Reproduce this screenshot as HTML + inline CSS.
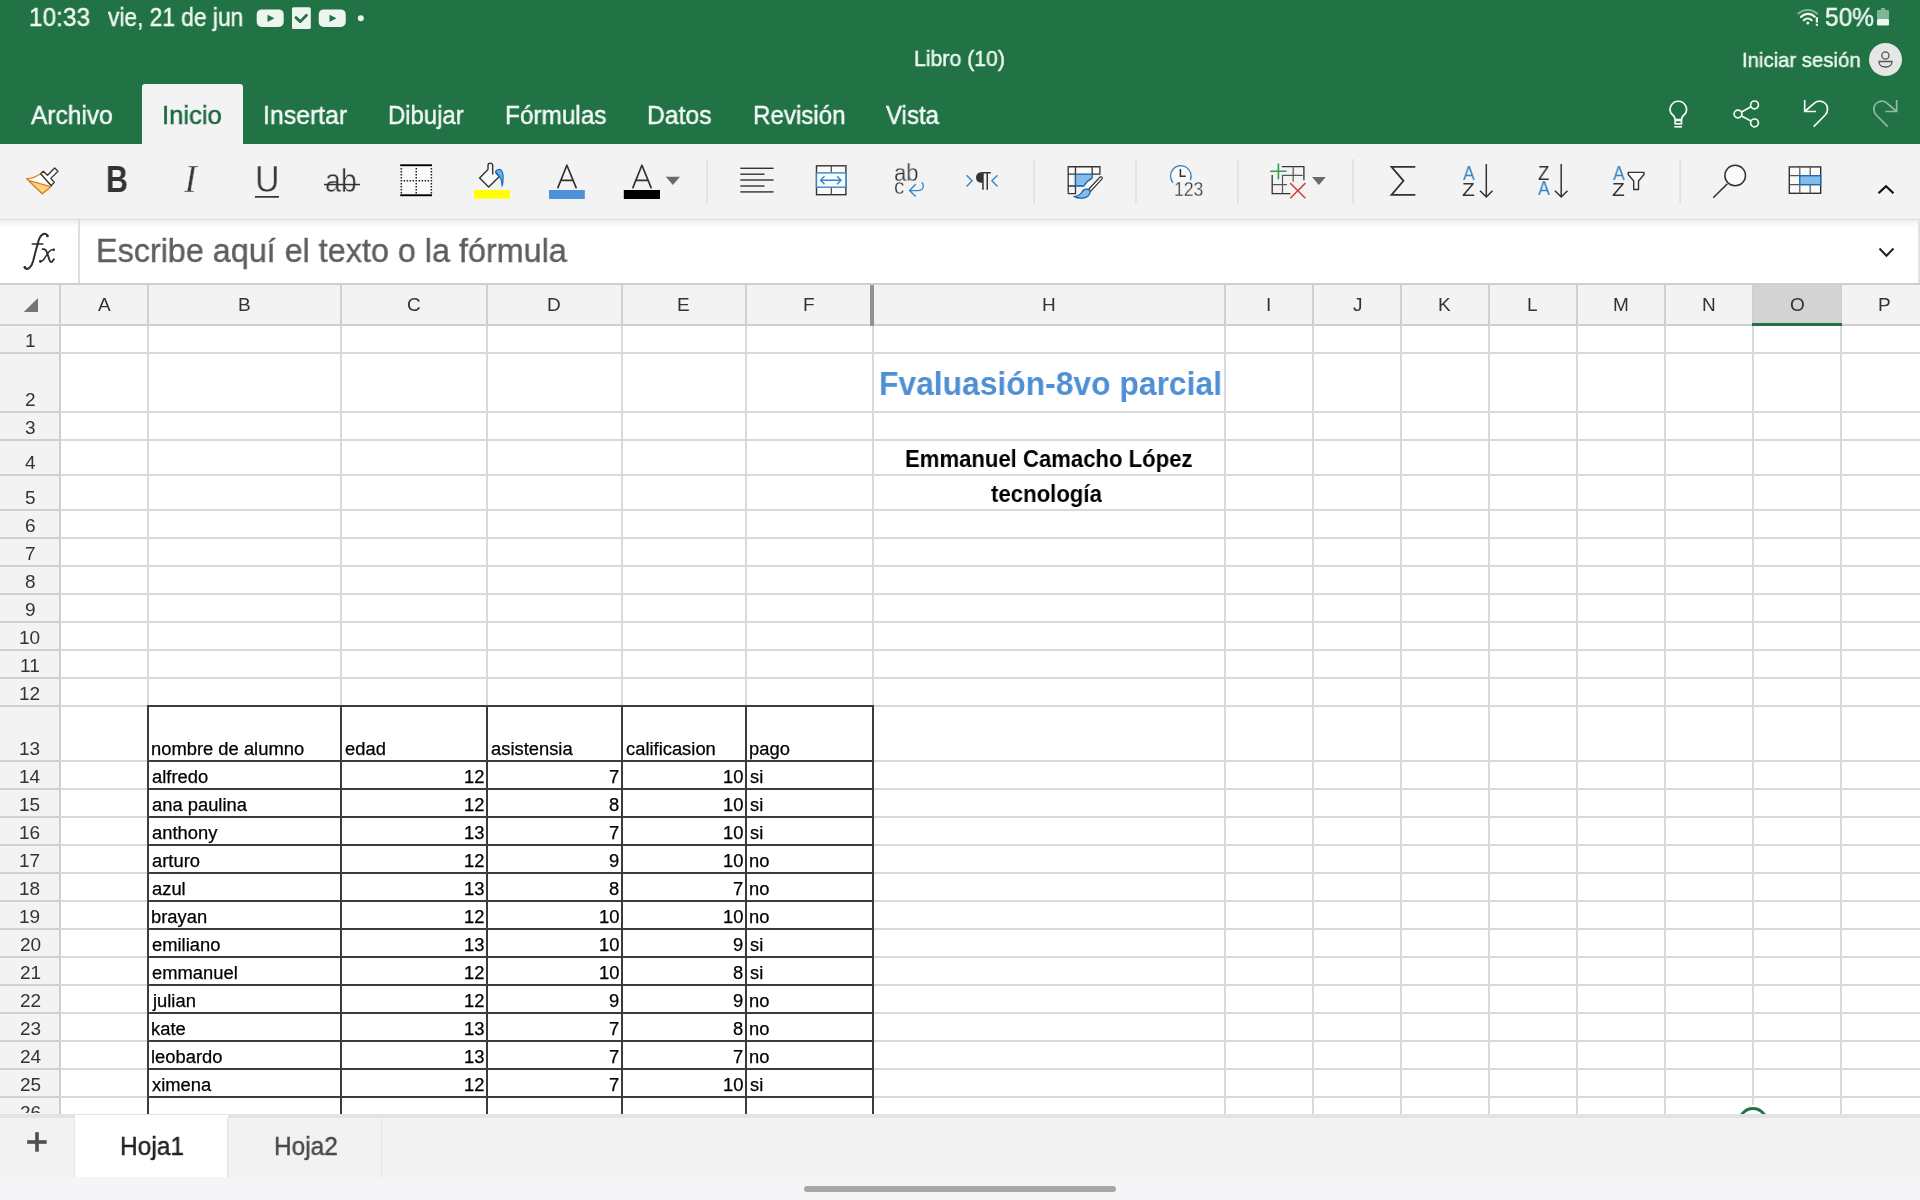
<!DOCTYPE html>
<html><head><meta charset="utf-8"><style>
html,body{margin:0;padding:0;width:1920px;height:1200px;overflow:hidden;background:#fff;}
.t{position:absolute;white-space:nowrap;line-height:1;transform-origin:0 0;will-change:transform;font-family:"Liberation Sans",sans-serif;}
.r{position:absolute;}
svg{position:absolute;left:0;top:0;}
</style></head><body>
<div class="r" style="left:0px;top:0px;width:1920px;height:144px;background:#217346;"></div>
<div class="r" style="left:0px;top:144px;width:1920px;height:75px;background:#f3f3f3;"></div>
<div class="r" style="left:0px;top:219px;width:1920px;height:1px;background:#dadada;"></div>
<div class="r" style="left:0px;top:220px;width:1920px;height:64px;background:#ffffff;"></div>
<div class="r" style="left:0px;top:284px;width:1920px;height:830px;background:#ffffff;"></div>
<div class="r" style="left:0px;top:1114px;width:1920px;height:63px;background:#f2f2f2;"></div>
<div class="r" style="left:0px;top:1177px;width:1920px;height:23px;background:#f5f5f7;"></div>
<div class="t" style="left:29.05px;top:4.84px;font-size:25px;color:#eef7f0;font-family:'Liberation Sans', sans-serif;font-weight:normal;font-style:normal;transform:scaleX(0.9748);-webkit-text-stroke:0.45px currentColor;">10:33</div>
<div class="t" style="left:108.00px;top:4.84px;font-size:25px;color:#eef7f0;font-family:'Liberation Sans', sans-serif;font-weight:normal;font-style:normal;transform:scaleX(0.9095);-webkit-text-stroke:0.45px currentColor;">vie, 21 de jun</div>
<div class="t" style="left:1825.02px;top:4.84px;font-size:25px;color:#eef7f0;font-family:'Liberation Sans', sans-serif;font-weight:normal;font-style:normal;transform:scaleX(0.9792);-webkit-text-stroke:0.45px currentColor;">50%</div>
<div class="t" style="left:914.31px;top:48.38px;font-size:22px;color:#eef7f0;font-family:'Liberation Sans', sans-serif;font-weight:normal;font-style:normal;transform:scaleX(0.9670);-webkit-text-stroke:0.45px currentColor;">Libro (10)</div>
<div class="t" style="left:1742.06px;top:48.92px;font-size:21px;color:#eef7f0;font-family:'Liberation Sans', sans-serif;font-weight:normal;font-style:normal;transform:scaleX(0.9677);-webkit-text-stroke:0.45px currentColor;">Iniciar sesión</div>
<div class="r" style="left:142px;top:84px;width:101px;height:61px;background:#f3f3f3;border-radius:3px 3px 0 0;"></div>
<div class="t" style="left:30.50px;top:101.99px;font-size:26px;color:#f4faf6;font-family:'Liberation Sans', sans-serif;font-weight:normal;font-style:normal;transform:scaleX(0.9423);-webkit-text-stroke:0.45px currentColor;">Archivo</div>
<div class="t" style="left:162.49px;top:101.99px;font-size:26px;color:#17673b;font-family:'Liberation Sans', sans-serif;font-weight:normal;font-style:normal;transform:scaleX(0.9843);-webkit-text-stroke:0.45px currentColor;">Inicio</div>
<div class="t" style="left:262.85px;top:101.99px;font-size:26px;color:#f4faf6;font-family:'Liberation Sans', sans-serif;font-weight:normal;font-style:normal;transform:scaleX(0.9544);-webkit-text-stroke:0.45px currentColor;">Insertar</div>
<div class="t" style="left:388.46px;top:101.99px;font-size:26px;color:#f4faf6;font-family:'Liberation Sans', sans-serif;font-weight:normal;font-style:normal;transform:scaleX(0.9187);-webkit-text-stroke:0.45px currentColor;">Dibujar</div>
<div class="t" style="left:505.43px;top:101.99px;font-size:26px;color:#f4faf6;font-family:'Liberation Sans', sans-serif;font-weight:normal;font-style:normal;transform:scaleX(0.9368);-webkit-text-stroke:0.45px currentColor;">Fórmulas</div>
<div class="t" style="left:647.40px;top:101.99px;font-size:26px;color:#f4faf6;font-family:'Liberation Sans', sans-serif;font-weight:normal;font-style:normal;transform:scaleX(0.9492);-webkit-text-stroke:0.45px currentColor;">Datos</div>
<div class="t" style="left:752.84px;top:101.99px;font-size:26px;color:#f4faf6;font-family:'Liberation Sans', sans-serif;font-weight:normal;font-style:normal;transform:scaleX(0.9281);-webkit-text-stroke:0.45px currentColor;">Revisión</div>
<div class="t" style="left:886.27px;top:101.99px;font-size:26px;color:#f4faf6;font-family:'Liberation Sans', sans-serif;font-weight:normal;font-style:normal;transform:scaleX(0.9240);-webkit-text-stroke:0.45px currentColor;">Vista</div>
<div class="t" style="left:105.97px;top:161.26px;font-size:37.5px;color:#333333;font-family:'Liberation Sans', sans-serif;font-weight:bold;font-style:normal;transform:scaleX(0.8130);">B</div>
<div class="t" style="left:184.24px;top:159.92px;font-size:39.5px;color:#333333;font-family:'Liberation Serif', serif;font-weight:normal;font-style:italic;transform:scaleX(0.9733);-webkit-text-stroke:0.5px #f3f3f3;">I</div>
<div class="t" style="left:254.90px;top:161.22px;font-size:37.25px;color:#333333;font-family:'Liberation Sans', sans-serif;font-weight:normal;font-style:normal;transform:scaleX(0.9082);-webkit-text-stroke:0.5px #f3f3f3;">U</div>
<div class="t" style="left:324.91px;top:165.03px;font-size:32.75px;color:#333333;font-family:'Liberation Sans', sans-serif;font-weight:normal;font-style:normal;transform:scaleX(0.8711);-webkit-text-stroke:0.5px #f3f3f3;">ab</div>
<div class="t" style="left:894.14px;top:162.08px;font-size:23.0px;color:#333333;font-family:'Liberation Sans', sans-serif;font-weight:normal;font-style:normal;transform:scaleX(0.9574);-webkit-text-stroke:0.3px #f3f3f3;">ab</div>
<div class="t" style="left:894.03px;top:177.26px;font-size:21.25px;color:#333333;font-family:'Liberation Sans', sans-serif;font-weight:normal;font-style:normal;transform:scaleX(0.9667);-webkit-text-stroke:0.3px #f3f3f3;">c</div>
<div class="t" style="left:1173.83px;top:179.29px;font-size:20.75px;color:#333333;font-family:'Liberation Sans', sans-serif;font-weight:normal;font-style:normal;transform:scaleX(0.8496);-webkit-text-stroke:0.3px #f3f3f3;">123</div>
<div class="t" style="left:1463.00px;top:162.77px;font-size:20.0px;color:#3a86c4;font-family:'Liberation Sans', sans-serif;font-weight:normal;font-style:normal;transform:scaleX(0.8830);">A</div>
<div class="t" style="left:1462.46px;top:179.50px;font-size:19.25px;color:#333333;font-family:'Liberation Sans', sans-serif;font-weight:normal;font-style:normal;transform:scaleX(1.0884);">Z</div>
<div class="t" style="left:1537.54px;top:162.86px;font-size:20.25px;color:#333333;font-family:'Liberation Sans', sans-serif;font-weight:normal;font-style:normal;transform:scaleX(0.9156);">Z</div>
<div class="t" style="left:1538.00px;top:179.28px;font-size:19.75px;color:#3a86c4;font-family:'Liberation Sans', sans-serif;font-weight:normal;font-style:normal;transform:scaleX(0.9000);">A</div>
<div class="t" style="left:1613.00px;top:162.77px;font-size:20.0px;color:#3a86c4;font-family:'Liberation Sans', sans-serif;font-weight:normal;font-style:normal;transform:scaleX(0.8830);">A</div>
<div class="t" style="left:1612.46px;top:179.50px;font-size:19.25px;color:#333333;font-family:'Liberation Sans', sans-serif;font-weight:normal;font-style:normal;transform:scaleX(1.0884);">Z</div>
<div class="r" style="left:0px;top:220px;width:1920px;height:8px;background:linear-gradient(#f0f0f0,#ffffff);"></div>
<div class="r" style="left:1918px;top:219px;width:2px;height:65px;background:#e2e2e2;"></div>
<div class="r" style="left:78px;top:220px;width:1.5px;height:63px;background:#dedede;"></div>
<div class="t" style="left:96.09px;top:233.12px;font-size:34px;color:#5e5e5e;font-family:'Liberation Sans', sans-serif;font-weight:normal;font-style:normal;transform:scaleX(0.9507);-webkit-text-stroke:0.4px currentColor;">Escribe aquí el texto o la fórmula</div>
<div class="r" style="left:0px;top:284px;width:1920px;height:41px;background:#f3f3f3;"></div>
<div class="r" style="left:0px;top:325px;width:60px;height:789px;background:#f3f3f3;"></div>
<div class="r" style="left:1753px;top:285px;width:88px;height:39px;background:#d3d3d3;"></div>
<div class="r" style="left:59px;top:284px;width:2px;height:830px;background:#cfcfcf;"></div>
<div class="r" style="left:147px;top:284px;width:2px;height:41px;background:#cfcfcf;"></div>
<div class="r" style="left:147px;top:325px;width:2px;height:789px;background:#d9d9db;"></div>
<div class="r" style="left:340px;top:284px;width:2px;height:41px;background:#cfcfcf;"></div>
<div class="r" style="left:340px;top:325px;width:2px;height:789px;background:#d9d9db;"></div>
<div class="r" style="left:486px;top:284px;width:2px;height:41px;background:#cfcfcf;"></div>
<div class="r" style="left:486px;top:325px;width:2px;height:789px;background:#d9d9db;"></div>
<div class="r" style="left:621px;top:284px;width:2px;height:41px;background:#cfcfcf;"></div>
<div class="r" style="left:621px;top:325px;width:2px;height:789px;background:#d9d9db;"></div>
<div class="r" style="left:745px;top:284px;width:2px;height:41px;background:#cfcfcf;"></div>
<div class="r" style="left:745px;top:325px;width:2px;height:789px;background:#d9d9db;"></div>
<div class="r" style="left:872px;top:284px;width:2px;height:41px;background:#cfcfcf;"></div>
<div class="r" style="left:872px;top:325px;width:2px;height:789px;background:#d9d9db;"></div>
<div class="r" style="left:1224px;top:284px;width:2px;height:41px;background:#cfcfcf;"></div>
<div class="r" style="left:1224px;top:325px;width:2px;height:789px;background:#d9d9db;"></div>
<div class="r" style="left:1312px;top:284px;width:2px;height:41px;background:#cfcfcf;"></div>
<div class="r" style="left:1312px;top:325px;width:2px;height:789px;background:#d9d9db;"></div>
<div class="r" style="left:1400px;top:284px;width:2px;height:41px;background:#cfcfcf;"></div>
<div class="r" style="left:1400px;top:325px;width:2px;height:789px;background:#d9d9db;"></div>
<div class="r" style="left:1488px;top:284px;width:2px;height:41px;background:#cfcfcf;"></div>
<div class="r" style="left:1488px;top:325px;width:2px;height:789px;background:#d9d9db;"></div>
<div class="r" style="left:1576px;top:284px;width:2px;height:41px;background:#cfcfcf;"></div>
<div class="r" style="left:1576px;top:325px;width:2px;height:789px;background:#d9d9db;"></div>
<div class="r" style="left:1664px;top:284px;width:2px;height:41px;background:#cfcfcf;"></div>
<div class="r" style="left:1664px;top:325px;width:2px;height:789px;background:#d9d9db;"></div>
<div class="r" style="left:1752px;top:284px;width:2px;height:41px;background:#cfcfcf;"></div>
<div class="r" style="left:1752px;top:325px;width:2px;height:789px;background:#d9d9db;"></div>
<div class="r" style="left:1840px;top:284px;width:2px;height:41px;background:#cfcfcf;"></div>
<div class="r" style="left:1840px;top:325px;width:2px;height:789px;background:#d9d9db;"></div>
<div class="r" style="left:0px;top:324px;width:1920px;height:2px;background:#cfcfcf;"></div>
<div class="r" style="left:0px;top:352px;width:60px;height:2px;background:#cfcfcf;"></div>
<div class="r" style="left:60px;top:352px;width:1860px;height:2px;background:#d9d9db;"></div>
<div class="r" style="left:0px;top:411px;width:60px;height:2px;background:#cfcfcf;"></div>
<div class="r" style="left:60px;top:411px;width:1860px;height:2px;background:#d9d9db;"></div>
<div class="r" style="left:0px;top:439px;width:60px;height:2px;background:#cfcfcf;"></div>
<div class="r" style="left:60px;top:439px;width:1860px;height:2px;background:#d9d9db;"></div>
<div class="r" style="left:0px;top:474px;width:60px;height:2px;background:#cfcfcf;"></div>
<div class="r" style="left:60px;top:474px;width:1860px;height:2px;background:#d9d9db;"></div>
<div class="r" style="left:0px;top:509px;width:60px;height:2px;background:#cfcfcf;"></div>
<div class="r" style="left:60px;top:509px;width:1860px;height:2px;background:#d9d9db;"></div>
<div class="r" style="left:0px;top:537px;width:60px;height:2px;background:#cfcfcf;"></div>
<div class="r" style="left:60px;top:537px;width:1860px;height:2px;background:#d9d9db;"></div>
<div class="r" style="left:0px;top:565px;width:60px;height:2px;background:#cfcfcf;"></div>
<div class="r" style="left:60px;top:565px;width:1860px;height:2px;background:#d9d9db;"></div>
<div class="r" style="left:0px;top:593px;width:60px;height:2px;background:#cfcfcf;"></div>
<div class="r" style="left:60px;top:593px;width:1860px;height:2px;background:#d9d9db;"></div>
<div class="r" style="left:0px;top:621px;width:60px;height:2px;background:#cfcfcf;"></div>
<div class="r" style="left:60px;top:621px;width:1860px;height:2px;background:#d9d9db;"></div>
<div class="r" style="left:0px;top:649px;width:60px;height:2px;background:#cfcfcf;"></div>
<div class="r" style="left:60px;top:649px;width:1860px;height:2px;background:#d9d9db;"></div>
<div class="r" style="left:0px;top:677px;width:60px;height:2px;background:#cfcfcf;"></div>
<div class="r" style="left:60px;top:677px;width:1860px;height:2px;background:#d9d9db;"></div>
<div class="r" style="left:0px;top:705px;width:60px;height:2px;background:#cfcfcf;"></div>
<div class="r" style="left:60px;top:705px;width:1860px;height:2px;background:#d9d9db;"></div>
<div class="r" style="left:0px;top:760px;width:60px;height:2px;background:#cfcfcf;"></div>
<div class="r" style="left:60px;top:760px;width:1860px;height:2px;background:#d9d9db;"></div>
<div class="r" style="left:0px;top:788px;width:60px;height:2px;background:#cfcfcf;"></div>
<div class="r" style="left:60px;top:788px;width:1860px;height:2px;background:#d9d9db;"></div>
<div class="r" style="left:0px;top:816px;width:60px;height:2px;background:#cfcfcf;"></div>
<div class="r" style="left:60px;top:816px;width:1860px;height:2px;background:#d9d9db;"></div>
<div class="r" style="left:0px;top:844px;width:60px;height:2px;background:#cfcfcf;"></div>
<div class="r" style="left:60px;top:844px;width:1860px;height:2px;background:#d9d9db;"></div>
<div class="r" style="left:0px;top:872px;width:60px;height:2px;background:#cfcfcf;"></div>
<div class="r" style="left:60px;top:872px;width:1860px;height:2px;background:#d9d9db;"></div>
<div class="r" style="left:0px;top:900px;width:60px;height:2px;background:#cfcfcf;"></div>
<div class="r" style="left:60px;top:900px;width:1860px;height:2px;background:#d9d9db;"></div>
<div class="r" style="left:0px;top:928px;width:60px;height:2px;background:#cfcfcf;"></div>
<div class="r" style="left:60px;top:928px;width:1860px;height:2px;background:#d9d9db;"></div>
<div class="r" style="left:0px;top:956px;width:60px;height:2px;background:#cfcfcf;"></div>
<div class="r" style="left:60px;top:956px;width:1860px;height:2px;background:#d9d9db;"></div>
<div class="r" style="left:0px;top:984px;width:60px;height:2px;background:#cfcfcf;"></div>
<div class="r" style="left:60px;top:984px;width:1860px;height:2px;background:#d9d9db;"></div>
<div class="r" style="left:0px;top:1012px;width:60px;height:2px;background:#cfcfcf;"></div>
<div class="r" style="left:60px;top:1012px;width:1860px;height:2px;background:#d9d9db;"></div>
<div class="r" style="left:0px;top:1040px;width:60px;height:2px;background:#cfcfcf;"></div>
<div class="r" style="left:60px;top:1040px;width:1860px;height:2px;background:#d9d9db;"></div>
<div class="r" style="left:0px;top:1068px;width:60px;height:2px;background:#cfcfcf;"></div>
<div class="r" style="left:60px;top:1068px;width:1860px;height:2px;background:#d9d9db;"></div>
<div class="r" style="left:0px;top:1096px;width:60px;height:2px;background:#cfcfcf;"></div>
<div class="r" style="left:60px;top:1096px;width:1860px;height:2px;background:#d9d9db;"></div>
<div class="r" style="left:0px;top:283px;width:1920px;height:2px;background:#cfcfcf;"></div>
<div class="r" style="left:870px;top:285px;width:4px;height:41px;background:#929292;"></div>
<div class="r" style="left:1752px;top:322.5px;width:90px;height:3.3px;background:#217346;"></div>
<div class="t" style="left:97.75px;top:294.92px;font-size:19px;color:#333333;font-family:'Liberation Sans', sans-serif;font-weight:normal;font-style:normal;transform:scaleX(1.0000);">A</div>
<div class="t" style="left:237.88px;top:294.92px;font-size:19px;color:#333333;font-family:'Liberation Sans', sans-serif;font-weight:normal;font-style:normal;transform:scaleX(1.0000);">B</div>
<div class="t" style="left:407.00px;top:294.92px;font-size:19px;color:#333333;font-family:'Liberation Sans', sans-serif;font-weight:normal;font-style:normal;transform:scaleX(1.0000);">C</div>
<div class="t" style="left:547.38px;top:294.92px;font-size:19px;color:#333333;font-family:'Liberation Sans', sans-serif;font-weight:normal;font-style:normal;transform:scaleX(1.0000);">D</div>
<div class="t" style="left:677.25px;top:294.92px;font-size:19px;color:#333333;font-family:'Liberation Sans', sans-serif;font-weight:normal;font-style:normal;transform:scaleX(1.0000);">E</div>
<div class="t" style="left:802.88px;top:294.92px;font-size:19px;color:#333333;font-family:'Liberation Sans', sans-serif;font-weight:normal;font-style:normal;transform:scaleX(1.0000);">F</div>
<div class="t" style="left:1041.62px;top:294.92px;font-size:19px;color:#333333;font-family:'Liberation Sans', sans-serif;font-weight:normal;font-style:normal;transform:scaleX(1.0000);">H</div>
<div class="t" style="left:1266.38px;top:294.92px;font-size:19px;color:#333333;font-family:'Liberation Sans', sans-serif;font-weight:normal;font-style:normal;transform:scaleX(1.0000);">I</div>
<div class="t" style="left:1352.88px;top:294.92px;font-size:19px;color:#333333;font-family:'Liberation Sans', sans-serif;font-weight:normal;font-style:normal;transform:scaleX(1.0000);">J</div>
<div class="t" style="left:1438.00px;top:294.92px;font-size:19px;color:#333333;font-family:'Liberation Sans', sans-serif;font-weight:normal;font-style:normal;transform:scaleX(1.0000);">K</div>
<div class="t" style="left:1527.25px;top:294.92px;font-size:19px;color:#333333;font-family:'Liberation Sans', sans-serif;font-weight:normal;font-style:normal;transform:scaleX(1.0000);">L</div>
<div class="t" style="left:1613.12px;top:294.92px;font-size:19px;color:#333333;font-family:'Liberation Sans', sans-serif;font-weight:normal;font-style:normal;transform:scaleX(1.0000);">M</div>
<div class="t" style="left:1702.12px;top:294.92px;font-size:19px;color:#333333;font-family:'Liberation Sans', sans-serif;font-weight:normal;font-style:normal;transform:scaleX(1.0000);">N</div>
<div class="t" style="left:1789.62px;top:294.92px;font-size:19px;color:#333333;font-family:'Liberation Sans', sans-serif;font-weight:normal;font-style:normal;transform:scaleX(1.0000);">O</div>
<div class="t" style="left:1878.38px;top:294.92px;font-size:19px;color:#333333;font-family:'Liberation Sans', sans-serif;font-weight:normal;font-style:normal;transform:scaleX(1.0000);">P</div>
<div class="t" style="left:24.68px;top:330.92px;font-size:19px;color:#333333;font-family:'Liberation Sans', sans-serif;font-weight:normal;font-style:normal;transform:scaleX(1.0000);">1</div>
<div class="t" style="left:24.93px;top:389.92px;font-size:19px;color:#333333;font-family:'Liberation Sans', sans-serif;font-weight:normal;font-style:normal;transform:scaleX(1.0000);">2</div>
<div class="t" style="left:25.05px;top:417.92px;font-size:19px;color:#333333;font-family:'Liberation Sans', sans-serif;font-weight:normal;font-style:normal;transform:scaleX(1.0000);">3</div>
<div class="t" style="left:25.05px;top:452.92px;font-size:19px;color:#333333;font-family:'Liberation Sans', sans-serif;font-weight:normal;font-style:normal;transform:scaleX(1.0000);">4</div>
<div class="t" style="left:25.05px;top:487.92px;font-size:19px;color:#333333;font-family:'Liberation Sans', sans-serif;font-weight:normal;font-style:normal;transform:scaleX(1.0000);">5</div>
<div class="t" style="left:24.93px;top:515.92px;font-size:19px;color:#333333;font-family:'Liberation Sans', sans-serif;font-weight:normal;font-style:normal;transform:scaleX(1.0000);">6</div>
<div class="t" style="left:24.93px;top:543.92px;font-size:19px;color:#333333;font-family:'Liberation Sans', sans-serif;font-weight:normal;font-style:normal;transform:scaleX(1.0000);">7</div>
<div class="t" style="left:25.05px;top:571.92px;font-size:19px;color:#333333;font-family:'Liberation Sans', sans-serif;font-weight:normal;font-style:normal;transform:scaleX(1.0000);">8</div>
<div class="t" style="left:25.05px;top:599.92px;font-size:19px;color:#333333;font-family:'Liberation Sans', sans-serif;font-weight:normal;font-style:normal;transform:scaleX(1.0000);">9</div>
<div class="t" style="left:19.43px;top:627.92px;font-size:19px;color:#333333;font-family:'Liberation Sans', sans-serif;font-weight:normal;font-style:normal;transform:scaleX(1.0000);">10</div>
<div class="t" style="left:20.05px;top:655.92px;font-size:19px;color:#333333;font-family:'Liberation Sans', sans-serif;font-weight:normal;font-style:normal;transform:scaleX(1.0000);">11</div>
<div class="t" style="left:19.43px;top:683.92px;font-size:19px;color:#333333;font-family:'Liberation Sans', sans-serif;font-weight:normal;font-style:normal;transform:scaleX(1.0000);">12</div>
<div class="t" style="left:19.43px;top:738.92px;font-size:19px;color:#333333;font-family:'Liberation Sans', sans-serif;font-weight:normal;font-style:normal;transform:scaleX(1.0000);">13</div>
<div class="t" style="left:19.30px;top:766.92px;font-size:19px;color:#333333;font-family:'Liberation Sans', sans-serif;font-weight:normal;font-style:normal;transform:scaleX(1.0000);">14</div>
<div class="t" style="left:19.43px;top:794.92px;font-size:19px;color:#333333;font-family:'Liberation Sans', sans-serif;font-weight:normal;font-style:normal;transform:scaleX(1.0000);">15</div>
<div class="t" style="left:19.43px;top:822.92px;font-size:19px;color:#333333;font-family:'Liberation Sans', sans-serif;font-weight:normal;font-style:normal;transform:scaleX(1.0000);">16</div>
<div class="t" style="left:19.43px;top:850.92px;font-size:19px;color:#333333;font-family:'Liberation Sans', sans-serif;font-weight:normal;font-style:normal;transform:scaleX(1.0000);">17</div>
<div class="t" style="left:19.43px;top:878.92px;font-size:19px;color:#333333;font-family:'Liberation Sans', sans-serif;font-weight:normal;font-style:normal;transform:scaleX(1.0000);">18</div>
<div class="t" style="left:19.43px;top:906.92px;font-size:19px;color:#333333;font-family:'Liberation Sans', sans-serif;font-weight:normal;font-style:normal;transform:scaleX(1.0000);">19</div>
<div class="t" style="left:19.68px;top:934.92px;font-size:19px;color:#333333;font-family:'Liberation Sans', sans-serif;font-weight:normal;font-style:normal;transform:scaleX(1.0000);">20</div>
<div class="t" style="left:19.68px;top:962.92px;font-size:19px;color:#333333;font-family:'Liberation Sans', sans-serif;font-weight:normal;font-style:normal;transform:scaleX(1.0000);">21</div>
<div class="t" style="left:19.68px;top:990.92px;font-size:19px;color:#333333;font-family:'Liberation Sans', sans-serif;font-weight:normal;font-style:normal;transform:scaleX(1.0000);">22</div>
<div class="t" style="left:19.68px;top:1018.92px;font-size:19px;color:#333333;font-family:'Liberation Sans', sans-serif;font-weight:normal;font-style:normal;transform:scaleX(1.0000);">23</div>
<div class="t" style="left:19.55px;top:1046.92px;font-size:19px;color:#333333;font-family:'Liberation Sans', sans-serif;font-weight:normal;font-style:normal;transform:scaleX(1.0000);">24</div>
<div class="t" style="left:19.68px;top:1074.92px;font-size:19px;color:#333333;font-family:'Liberation Sans', sans-serif;font-weight:normal;font-style:normal;transform:scaleX(1.0000);">25</div>
<div class="r" style="left:0;top:1097px;width:60px;height:16px;overflow:hidden;">
<div class="t" style="left:19.68px;top:5.92px;font-size:19px;color:#333333;font-family:'Liberation Sans', sans-serif;font-weight:normal;font-style:normal;transform:scaleX(1.0000);">26</div>
</div>
<div class="t" style="left:879.15px;top:366.12px;font-size:34px;color:#4f8fd5;font-family:'Liberation Sans', sans-serif;font-weight:bold;font-style:normal;transform:scaleX(0.9355);">Fvaluasión-8vo parcial</div>
<div class="t" style="left:905.35px;top:447.16px;font-size:24.5px;color:#000;font-family:'Liberation Sans', sans-serif;font-weight:bold;font-style:normal;transform:scaleX(0.9025);">Emmanuel Camacho López</div>
<div class="t" style="left:991.02px;top:481.96px;font-size:24.5px;color:#000;font-family:'Liberation Sans', sans-serif;font-weight:bold;font-style:normal;transform:scaleX(0.9049);">tecnología</div>
<div class="r" style="left:147px;top:705px;width:2px;height:409px;background:#3b3b3b;"></div>
<div class="r" style="left:340px;top:705px;width:2px;height:409px;background:#3b3b3b;"></div>
<div class="r" style="left:486px;top:705px;width:2px;height:409px;background:#3b3b3b;"></div>
<div class="r" style="left:621px;top:705px;width:2px;height:409px;background:#3b3b3b;"></div>
<div class="r" style="left:745px;top:705px;width:2px;height:409px;background:#3b3b3b;"></div>
<div class="r" style="left:872px;top:705px;width:2px;height:409px;background:#3b3b3b;"></div>
<div class="r" style="left:147px;top:705px;width:727px;height:2px;background:#3b3b3b;"></div>
<div class="r" style="left:147px;top:760px;width:727px;height:2px;background:#3b3b3b;"></div>
<div class="r" style="left:147px;top:788px;width:727px;height:2px;background:#3b3b3b;"></div>
<div class="r" style="left:147px;top:816px;width:727px;height:2px;background:#3b3b3b;"></div>
<div class="r" style="left:147px;top:844px;width:727px;height:2px;background:#3b3b3b;"></div>
<div class="r" style="left:147px;top:872px;width:727px;height:2px;background:#3b3b3b;"></div>
<div class="r" style="left:147px;top:900px;width:727px;height:2px;background:#3b3b3b;"></div>
<div class="r" style="left:147px;top:928px;width:727px;height:2px;background:#3b3b3b;"></div>
<div class="r" style="left:147px;top:956px;width:727px;height:2px;background:#3b3b3b;"></div>
<div class="r" style="left:147px;top:984px;width:727px;height:2px;background:#3b3b3b;"></div>
<div class="r" style="left:147px;top:1012px;width:727px;height:2px;background:#3b3b3b;"></div>
<div class="r" style="left:147px;top:1040px;width:727px;height:2px;background:#3b3b3b;"></div>
<div class="r" style="left:147px;top:1068px;width:727px;height:2px;background:#3b3b3b;"></div>
<div class="r" style="left:147px;top:1096px;width:727px;height:2px;background:#3b3b3b;"></div>
<div class="t" style="left:151.32px;top:739.76px;font-size:18px;color:#000;font-family:'Liberation Sans', sans-serif;font-weight:normal;font-style:normal;transform:scaleX(1.0200);-webkit-text-stroke:0.25px currentColor;">nombre de alumno</div>
<div class="t" style="left:344.84px;top:739.76px;font-size:18px;color:#000;font-family:'Liberation Sans', sans-serif;font-weight:normal;font-style:normal;transform:scaleX(1.0200);-webkit-text-stroke:0.25px currentColor;">edad</div>
<div class="t" style="left:490.84px;top:739.76px;font-size:18px;color:#000;font-family:'Liberation Sans', sans-serif;font-weight:normal;font-style:normal;transform:scaleX(1.0200);-webkit-text-stroke:0.25px currentColor;">asistensia</div>
<div class="t" style="left:625.84px;top:739.76px;font-size:18px;color:#000;font-family:'Liberation Sans', sans-serif;font-weight:normal;font-style:normal;transform:scaleX(1.0200);-webkit-text-stroke:0.25px currentColor;">calificasion</div>
<div class="t" style="left:749.33px;top:739.76px;font-size:18px;color:#000;font-family:'Liberation Sans', sans-serif;font-weight:normal;font-style:normal;transform:scaleX(1.0200);-webkit-text-stroke:0.25px currentColor;">pago</div>
<div class="t" style="left:151.84px;top:767.76px;font-size:18px;color:#000;font-family:'Liberation Sans', sans-serif;font-weight:normal;font-style:normal;transform:scaleX(1.0200);-webkit-text-stroke:0.25px currentColor;">alfredo</div>
<div class="t" style="left:464.06px;top:767.76px;font-size:18px;color:#000;font-family:'Liberation Sans', sans-serif;font-weight:normal;font-style:normal;transform:scaleX(1.0200);-webkit-text-stroke:0.25px currentColor;">12</div>
<div class="t" style="left:609.27px;top:767.76px;font-size:18px;color:#000;font-family:'Liberation Sans', sans-serif;font-weight:normal;font-style:normal;transform:scaleX(1.0200);-webkit-text-stroke:0.25px currentColor;">7</div>
<div class="t" style="left:723.07px;top:767.76px;font-size:18px;color:#000;font-family:'Liberation Sans', sans-serif;font-weight:normal;font-style:normal;transform:scaleX(1.0200);-webkit-text-stroke:0.25px currentColor;">10</div>
<div class="t" style="left:750.09px;top:767.76px;font-size:18px;color:#000;font-family:'Liberation Sans', sans-serif;font-weight:normal;font-style:normal;transform:scaleX(1.0200);-webkit-text-stroke:0.25px currentColor;">si</div>
<div class="t" style="left:151.84px;top:795.76px;font-size:18px;color:#000;font-family:'Liberation Sans', sans-serif;font-weight:normal;font-style:normal;transform:scaleX(1.0200);-webkit-text-stroke:0.25px currentColor;">ana paulina</div>
<div class="t" style="left:464.06px;top:795.76px;font-size:18px;color:#000;font-family:'Liberation Sans', sans-serif;font-weight:normal;font-style:normal;transform:scaleX(1.0200);-webkit-text-stroke:0.25px currentColor;">12</div>
<div class="t" style="left:609.27px;top:795.76px;font-size:18px;color:#000;font-family:'Liberation Sans', sans-serif;font-weight:normal;font-style:normal;transform:scaleX(1.0200);-webkit-text-stroke:0.25px currentColor;">8</div>
<div class="t" style="left:723.07px;top:795.76px;font-size:18px;color:#000;font-family:'Liberation Sans', sans-serif;font-weight:normal;font-style:normal;transform:scaleX(1.0200);-webkit-text-stroke:0.25px currentColor;">10</div>
<div class="t" style="left:750.09px;top:795.76px;font-size:18px;color:#000;font-family:'Liberation Sans', sans-serif;font-weight:normal;font-style:normal;transform:scaleX(1.0200);-webkit-text-stroke:0.25px currentColor;">si</div>
<div class="t" style="left:151.84px;top:823.76px;font-size:18px;color:#000;font-family:'Liberation Sans', sans-serif;font-weight:normal;font-style:normal;transform:scaleX(1.0200);-webkit-text-stroke:0.25px currentColor;">anthony</div>
<div class="t" style="left:464.06px;top:823.76px;font-size:18px;color:#000;font-family:'Liberation Sans', sans-serif;font-weight:normal;font-style:normal;transform:scaleX(1.0200);-webkit-text-stroke:0.25px currentColor;">13</div>
<div class="t" style="left:609.27px;top:823.76px;font-size:18px;color:#000;font-family:'Liberation Sans', sans-serif;font-weight:normal;font-style:normal;transform:scaleX(1.0200);-webkit-text-stroke:0.25px currentColor;">7</div>
<div class="t" style="left:723.07px;top:823.76px;font-size:18px;color:#000;font-family:'Liberation Sans', sans-serif;font-weight:normal;font-style:normal;transform:scaleX(1.0200);-webkit-text-stroke:0.25px currentColor;">10</div>
<div class="t" style="left:750.09px;top:823.76px;font-size:18px;color:#000;font-family:'Liberation Sans', sans-serif;font-weight:normal;font-style:normal;transform:scaleX(1.0200);-webkit-text-stroke:0.25px currentColor;">si</div>
<div class="t" style="left:151.84px;top:851.76px;font-size:18px;color:#000;font-family:'Liberation Sans', sans-serif;font-weight:normal;font-style:normal;transform:scaleX(1.0200);-webkit-text-stroke:0.25px currentColor;">arturo</div>
<div class="t" style="left:464.06px;top:851.76px;font-size:18px;color:#000;font-family:'Liberation Sans', sans-serif;font-weight:normal;font-style:normal;transform:scaleX(1.0200);-webkit-text-stroke:0.25px currentColor;">12</div>
<div class="t" style="left:609.27px;top:851.76px;font-size:18px;color:#000;font-family:'Liberation Sans', sans-serif;font-weight:normal;font-style:normal;transform:scaleX(1.0200);-webkit-text-stroke:0.25px currentColor;">9</div>
<div class="t" style="left:723.07px;top:851.76px;font-size:18px;color:#000;font-family:'Liberation Sans', sans-serif;font-weight:normal;font-style:normal;transform:scaleX(1.0200);-webkit-text-stroke:0.25px currentColor;">10</div>
<div class="t" style="left:749.33px;top:851.76px;font-size:18px;color:#000;font-family:'Liberation Sans', sans-serif;font-weight:normal;font-style:normal;transform:scaleX(1.0200);-webkit-text-stroke:0.25px currentColor;">no</div>
<div class="t" style="left:151.84px;top:879.76px;font-size:18px;color:#000;font-family:'Liberation Sans', sans-serif;font-weight:normal;font-style:normal;transform:scaleX(1.0200);-webkit-text-stroke:0.25px currentColor;">azul</div>
<div class="t" style="left:464.06px;top:879.76px;font-size:18px;color:#000;font-family:'Liberation Sans', sans-serif;font-weight:normal;font-style:normal;transform:scaleX(1.0200);-webkit-text-stroke:0.25px currentColor;">13</div>
<div class="t" style="left:609.27px;top:879.76px;font-size:18px;color:#000;font-family:'Liberation Sans', sans-serif;font-weight:normal;font-style:normal;transform:scaleX(1.0200);-webkit-text-stroke:0.25px currentColor;">8</div>
<div class="t" style="left:733.27px;top:879.76px;font-size:18px;color:#000;font-family:'Liberation Sans', sans-serif;font-weight:normal;font-style:normal;transform:scaleX(1.0200);-webkit-text-stroke:0.25px currentColor;">7</div>
<div class="t" style="left:749.33px;top:879.76px;font-size:18px;color:#000;font-family:'Liberation Sans', sans-serif;font-weight:normal;font-style:normal;transform:scaleX(1.0200);-webkit-text-stroke:0.25px currentColor;">no</div>
<div class="t" style="left:151.32px;top:907.76px;font-size:18px;color:#000;font-family:'Liberation Sans', sans-serif;font-weight:normal;font-style:normal;transform:scaleX(1.0200);-webkit-text-stroke:0.25px currentColor;">brayan</div>
<div class="t" style="left:464.06px;top:907.76px;font-size:18px;color:#000;font-family:'Liberation Sans', sans-serif;font-weight:normal;font-style:normal;transform:scaleX(1.0200);-webkit-text-stroke:0.25px currentColor;">12</div>
<div class="t" style="left:599.07px;top:907.76px;font-size:18px;color:#000;font-family:'Liberation Sans', sans-serif;font-weight:normal;font-style:normal;transform:scaleX(1.0200);-webkit-text-stroke:0.25px currentColor;">10</div>
<div class="t" style="left:723.07px;top:907.76px;font-size:18px;color:#000;font-family:'Liberation Sans', sans-serif;font-weight:normal;font-style:normal;transform:scaleX(1.0200);-webkit-text-stroke:0.25px currentColor;">10</div>
<div class="t" style="left:749.33px;top:907.76px;font-size:18px;color:#000;font-family:'Liberation Sans', sans-serif;font-weight:normal;font-style:normal;transform:scaleX(1.0200);-webkit-text-stroke:0.25px currentColor;">no</div>
<div class="t" style="left:151.84px;top:935.76px;font-size:18px;color:#000;font-family:'Liberation Sans', sans-serif;font-weight:normal;font-style:normal;transform:scaleX(1.0200);-webkit-text-stroke:0.25px currentColor;">emiliano</div>
<div class="t" style="left:464.06px;top:935.76px;font-size:18px;color:#000;font-family:'Liberation Sans', sans-serif;font-weight:normal;font-style:normal;transform:scaleX(1.0200);-webkit-text-stroke:0.25px currentColor;">13</div>
<div class="t" style="left:599.07px;top:935.76px;font-size:18px;color:#000;font-family:'Liberation Sans', sans-serif;font-weight:normal;font-style:normal;transform:scaleX(1.0200);-webkit-text-stroke:0.25px currentColor;">10</div>
<div class="t" style="left:733.27px;top:935.76px;font-size:18px;color:#000;font-family:'Liberation Sans', sans-serif;font-weight:normal;font-style:normal;transform:scaleX(1.0200);-webkit-text-stroke:0.25px currentColor;">9</div>
<div class="t" style="left:750.09px;top:935.76px;font-size:18px;color:#000;font-family:'Liberation Sans', sans-serif;font-weight:normal;font-style:normal;transform:scaleX(1.0200);-webkit-text-stroke:0.25px currentColor;">si</div>
<div class="t" style="left:151.84px;top:963.76px;font-size:18px;color:#000;font-family:'Liberation Sans', sans-serif;font-weight:normal;font-style:normal;transform:scaleX(1.0200);-webkit-text-stroke:0.25px currentColor;">emmanuel</div>
<div class="t" style="left:464.06px;top:963.76px;font-size:18px;color:#000;font-family:'Liberation Sans', sans-serif;font-weight:normal;font-style:normal;transform:scaleX(1.0200);-webkit-text-stroke:0.25px currentColor;">12</div>
<div class="t" style="left:599.07px;top:963.76px;font-size:18px;color:#000;font-family:'Liberation Sans', sans-serif;font-weight:normal;font-style:normal;transform:scaleX(1.0200);-webkit-text-stroke:0.25px currentColor;">10</div>
<div class="t" style="left:733.27px;top:963.76px;font-size:18px;color:#000;font-family:'Liberation Sans', sans-serif;font-weight:normal;font-style:normal;transform:scaleX(1.0200);-webkit-text-stroke:0.25px currentColor;">8</div>
<div class="t" style="left:750.09px;top:963.76px;font-size:18px;color:#000;font-family:'Liberation Sans', sans-serif;font-weight:normal;font-style:normal;transform:scaleX(1.0200);-webkit-text-stroke:0.25px currentColor;">si</div>
<div class="t" style="left:153.11px;top:991.76px;font-size:18px;color:#000;font-family:'Liberation Sans', sans-serif;font-weight:normal;font-style:normal;transform:scaleX(1.0200);-webkit-text-stroke:0.25px currentColor;">julian</div>
<div class="t" style="left:464.06px;top:991.76px;font-size:18px;color:#000;font-family:'Liberation Sans', sans-serif;font-weight:normal;font-style:normal;transform:scaleX(1.0200);-webkit-text-stroke:0.25px currentColor;">12</div>
<div class="t" style="left:609.27px;top:991.76px;font-size:18px;color:#000;font-family:'Liberation Sans', sans-serif;font-weight:normal;font-style:normal;transform:scaleX(1.0200);-webkit-text-stroke:0.25px currentColor;">9</div>
<div class="t" style="left:733.27px;top:991.76px;font-size:18px;color:#000;font-family:'Liberation Sans', sans-serif;font-weight:normal;font-style:normal;transform:scaleX(1.0200);-webkit-text-stroke:0.25px currentColor;">9</div>
<div class="t" style="left:749.33px;top:991.76px;font-size:18px;color:#000;font-family:'Liberation Sans', sans-serif;font-weight:normal;font-style:normal;transform:scaleX(1.0200);-webkit-text-stroke:0.25px currentColor;">no</div>
<div class="t" style="left:151.32px;top:1019.76px;font-size:18px;color:#000;font-family:'Liberation Sans', sans-serif;font-weight:normal;font-style:normal;transform:scaleX(1.0200);-webkit-text-stroke:0.25px currentColor;">kate</div>
<div class="t" style="left:464.06px;top:1019.76px;font-size:18px;color:#000;font-family:'Liberation Sans', sans-serif;font-weight:normal;font-style:normal;transform:scaleX(1.0200);-webkit-text-stroke:0.25px currentColor;">13</div>
<div class="t" style="left:609.27px;top:1019.76px;font-size:18px;color:#000;font-family:'Liberation Sans', sans-serif;font-weight:normal;font-style:normal;transform:scaleX(1.0200);-webkit-text-stroke:0.25px currentColor;">7</div>
<div class="t" style="left:733.27px;top:1019.76px;font-size:18px;color:#000;font-family:'Liberation Sans', sans-serif;font-weight:normal;font-style:normal;transform:scaleX(1.0200);-webkit-text-stroke:0.25px currentColor;">8</div>
<div class="t" style="left:749.33px;top:1019.76px;font-size:18px;color:#000;font-family:'Liberation Sans', sans-serif;font-weight:normal;font-style:normal;transform:scaleX(1.0200);-webkit-text-stroke:0.25px currentColor;">no</div>
<div class="t" style="left:151.32px;top:1047.76px;font-size:18px;color:#000;font-family:'Liberation Sans', sans-serif;font-weight:normal;font-style:normal;transform:scaleX(1.0200);-webkit-text-stroke:0.25px currentColor;">leobardo</div>
<div class="t" style="left:464.06px;top:1047.76px;font-size:18px;color:#000;font-family:'Liberation Sans', sans-serif;font-weight:normal;font-style:normal;transform:scaleX(1.0200);-webkit-text-stroke:0.25px currentColor;">13</div>
<div class="t" style="left:609.27px;top:1047.76px;font-size:18px;color:#000;font-family:'Liberation Sans', sans-serif;font-weight:normal;font-style:normal;transform:scaleX(1.0200);-webkit-text-stroke:0.25px currentColor;">7</div>
<div class="t" style="left:733.27px;top:1047.76px;font-size:18px;color:#000;font-family:'Liberation Sans', sans-serif;font-weight:normal;font-style:normal;transform:scaleX(1.0200);-webkit-text-stroke:0.25px currentColor;">7</div>
<div class="t" style="left:749.33px;top:1047.76px;font-size:18px;color:#000;font-family:'Liberation Sans', sans-serif;font-weight:normal;font-style:normal;transform:scaleX(1.0200);-webkit-text-stroke:0.25px currentColor;">no</div>
<div class="t" style="left:152.34px;top:1075.76px;font-size:18px;color:#000;font-family:'Liberation Sans', sans-serif;font-weight:normal;font-style:normal;transform:scaleX(1.0200);-webkit-text-stroke:0.25px currentColor;">ximena</div>
<div class="t" style="left:464.06px;top:1075.76px;font-size:18px;color:#000;font-family:'Liberation Sans', sans-serif;font-weight:normal;font-style:normal;transform:scaleX(1.0200);-webkit-text-stroke:0.25px currentColor;">12</div>
<div class="t" style="left:609.27px;top:1075.76px;font-size:18px;color:#000;font-family:'Liberation Sans', sans-serif;font-weight:normal;font-style:normal;transform:scaleX(1.0200);-webkit-text-stroke:0.25px currentColor;">7</div>
<div class="t" style="left:723.07px;top:1075.76px;font-size:18px;color:#000;font-family:'Liberation Sans', sans-serif;font-weight:normal;font-style:normal;transform:scaleX(1.0200);-webkit-text-stroke:0.25px currentColor;">10</div>
<div class="t" style="left:750.09px;top:1075.76px;font-size:18px;color:#000;font-family:'Liberation Sans', sans-serif;font-weight:normal;font-style:normal;transform:scaleX(1.0200);-webkit-text-stroke:0.25px currentColor;">si</div>
<div class="r" style="left:0px;top:1114px;width:1920px;height:4px;background:#e3e3e3;"></div>
<div class="r" style="left:75px;top:1115px;width:152.5px;height:62px;background:#ffffff;"></div>
<div class="r" style="left:227.3px;top:1118px;width:1.5px;height:59px;background:#e6e6e6;"></div>
<div class="r" style="left:74px;top:1118px;width:1.3px;height:59px;background:#e6e6e6;"></div>
<div class="r" style="left:380.5px;top:1118px;width:1.5px;height:59px;background:#e4e4e4;"></div>
<div class="t" style="left:120.12px;top:1132.99px;font-size:26px;color:#222222;font-family:'Liberation Sans', sans-serif;font-weight:normal;font-style:normal;transform:scaleX(0.9421);-webkit-text-stroke:0.45px currentColor;">Hoja1</div>
<div class="t" style="left:273.62px;top:1132.89px;font-size:26px;color:#4a4a4a;font-family:'Liberation Sans', sans-serif;font-weight:normal;font-style:normal;transform:scaleX(0.9382);-webkit-text-stroke:0.45px currentColor;">Hoja2</div>
<div class="r" style="left:804px;top:1186px;width:312px;height:6px;background:#a6a6a6;border-radius:3px;"></div>
<div class="r" style="left:1730px;top:1100px;width:46px;height:14px;overflow:hidden;"><div class="r" style="left:7.6px;top:7px;width:24px;height:24px;border:3px solid #217346;border-radius:50%;background:#fff;box-shadow:0 0 0 2px #fff;"></div></div>
<svg width="1920" height="1200" viewBox="0 0 1920 1200">
<rect x="256.7" y="9.4" width="27" height="17.6" rx="5" fill="#eef5ef"/>
<path d="M267.5 14.8 L274.5 18.3 L267.5 21.9 Z" fill="#217346"/>
<rect x="292" y="7.3" width="18.8" height="21.7" rx="1.5" fill="#eef5ef"/>
<path d="M296 17.6 L300.3 21.6 L306.5 15.2" stroke="#217346" stroke-width="2.8" fill="none" stroke-linecap="round" stroke-linejoin="round"/>
<rect x="318.75" y="9.4" width="27" height="17.6" rx="5" fill="#eef5ef"/>
<path d="M329.5 14.8 L336.5 18.3 L329.5 21.9 Z" fill="#217346"/>
<circle cx="360.8" cy="18.3" r="3" fill="#eef5ef"/>
<g fill="none" stroke-linecap="round"><path d="M1798.3 13.6 A14 14 0 0 1 1817.2 13.6" stroke="#7fb596" stroke-width="2"/><path d="M1801 17 A9.2 9.2 0 0 1 1814.8 16.8" stroke="#eef7f0" stroke-width="2.2"/><path d="M1803.8 20.2 A5.7 5.7 0 0 1 1811.6 20.2" stroke="#eef7f0" stroke-width="2.2"/></g>
<circle cx="1807.8" cy="23" r="1.5" fill="#eef7f0"/>
<rect x="1815.8" y="17.2" width="2.2" height="5.3" fill="#eef7f0"/><rect x="1815.8" y="23.8" width="2.2" height="2" fill="#eef7f0"/>
<rect x="1881" y="8" width="4" height="2" fill="#7fb596"/>
<rect x="1877" y="10" width="12" height="9" rx="1" fill="#7fb596"/>
<rect x="1877" y="19" width="12" height="6.6" rx="1" fill="#eef7f0"/>
<circle cx="1885.5" cy="59.5" r="16.5" fill="#e6e6e6"/>
<circle cx="1885.4" cy="55.5" r="3.6" fill="none" stroke="#555" stroke-width="1.3"/>
<path d="M1879 61.5 L1892 61.5 Q1892 67 1885.5 67 Q1879 67 1879 61.5 Z" fill="none" stroke="#555" stroke-width="1.3"/>
<g fill="none" stroke="#f4faf6" stroke-width="1.7"><path d="M1675.3 119.7 Q1674.6 116 1670.9 113 A8.2 8.2 0 1 1 1685.7 113 Q1682.1 116 1681.4 119.7 Z"/><rect x="1675.2" y="120.4" width="6.3" height="3.4"/><path d="M1674.3 126.8 L1682 126.8"/><circle cx="1754.5" cy="104.9" r="3.9"/><circle cx="1738" cy="114" r="3.9"/><circle cx="1754.5" cy="122.9" r="3.9"/><path d="M1741.5 112 L1751 106.8 M1741.5 116 L1751 121"/><path d="M1804.7 100 L1804.7 111.5 L1816 111.5 M1804.7 111.5 L1813.8 103.6 A8 8 0 0 1 1827.5 109.3 A8 8 0 0 1 1825.2 115 L1813.7 126.7"/></g>
<g fill="none" stroke="#8dbb9f" stroke-width="1.7"><path d="M1896.7 100 L1896.7 111.5 L1885.4 111.5 M1896.7 111.5 L1887.6 103.6 A8 8 0 0 0 1873.9 109.3 A8 8 0 0 0 1876.2 115 L1887.7 126.7"/></g>
<path d="M40.5 173.7 Q33 179 26.5 178.5 L42.3 193.7 L51.3 186.3 Z" fill="#ffffff" stroke="#d9822b" stroke-width="1.2" stroke-linejoin="round"/>
<path d="M28.3 180.3 L50.7 186.7 L42.3 193.7 Z" fill="#fcd57e" stroke="#d9822b" stroke-width="1.2" stroke-linejoin="round"/>
<path d="M40.7 173.7 L43.3 171.3 L47.5 175.3 L54.7 168 L58 171.2 L50.7 178.4 L54.3 182.2 L51.3 185.6 Z" fill="#fff" stroke="#333" stroke-width="1.3" stroke-linejoin="round"/>
<rect x="255" y="196" width="24" height="1.7" fill="#333"/>
<rect x="324" y="183.8" width="36" height="1.5" fill="#333"/>
<rect x="401" y="166" width="31" height="28.3" fill="#fafafa"/>
<rect x="400.2" y="164.3" width="31.8" height="1.9" fill="#000"/><rect x="400.2" y="194.3" width="31.8" height="1.9" fill="#000"/>
<rect x="400.6" y="168" width="1.5" height="1.5" fill="#222"/><rect x="415.5" y="168" width="1.5" height="1.5" fill="#222"/><rect x="430.6" y="168" width="1.5" height="1.5" fill="#222"/><rect x="400.6" y="171" width="1.5" height="1.5" fill="#222"/><rect x="415.5" y="171" width="1.5" height="1.5" fill="#222"/><rect x="430.6" y="171" width="1.5" height="1.5" fill="#222"/><rect x="400.6" y="174" width="1.5" height="1.5" fill="#222"/><rect x="415.5" y="174" width="1.5" height="1.5" fill="#222"/><rect x="430.6" y="174" width="1.5" height="1.5" fill="#222"/><rect x="400.6" y="177" width="1.5" height="1.5" fill="#222"/><rect x="415.5" y="177" width="1.5" height="1.5" fill="#222"/><rect x="430.6" y="177" width="1.5" height="1.5" fill="#222"/><rect x="400.6" y="180" width="1.5" height="1.5" fill="#222"/><rect x="415.5" y="180" width="1.5" height="1.5" fill="#222"/><rect x="430.6" y="180" width="1.5" height="1.5" fill="#222"/><rect x="400.6" y="183" width="1.5" height="1.5" fill="#222"/><rect x="415.5" y="183" width="1.5" height="1.5" fill="#222"/><rect x="430.6" y="183" width="1.5" height="1.5" fill="#222"/><rect x="400.6" y="186" width="1.5" height="1.5" fill="#222"/><rect x="415.5" y="186" width="1.5" height="1.5" fill="#222"/><rect x="430.6" y="186" width="1.5" height="1.5" fill="#222"/><rect x="400.6" y="189" width="1.5" height="1.5" fill="#222"/><rect x="415.5" y="189" width="1.5" height="1.5" fill="#222"/><rect x="430.6" y="189" width="1.5" height="1.5" fill="#222"/><rect x="400.6" y="192" width="1.5" height="1.5" fill="#222"/><rect x="415.5" y="192" width="1.5" height="1.5" fill="#222"/><rect x="430.6" y="192" width="1.5" height="1.5" fill="#222"/><rect x="403.6" y="180" width="1.5" height="1.5" fill="#222"/><rect x="406.6" y="180" width="1.5" height="1.5" fill="#222"/><rect x="409.6" y="180" width="1.5" height="1.5" fill="#222"/><rect x="412.6" y="180" width="1.5" height="1.5" fill="#222"/><rect x="418.6" y="180" width="1.5" height="1.5" fill="#222"/><rect x="421.6" y="180" width="1.5" height="1.5" fill="#222"/><rect x="424.6" y="180" width="1.5" height="1.5" fill="#222"/><rect x="427.6" y="180" width="1.5" height="1.5" fill="#222"/>
<rect x="474" y="190" width="36" height="8.7" fill="#ffff00"/>
<path d="M488 169.6 L479.6 177.9 L488.7 186.9 L499.4 176.4 L495.5 172.5" fill="#fafafa" stroke="#333" stroke-width="1.4" stroke-linejoin="miter"/>
<path d="M488 169.6 L488 165.5 A2.35 2.35 0 0 1 492.7 165.5 L492.7 174.5" fill="none" stroke="#333" stroke-width="1.4"/>
<path d="M495.5 171.5 Q499 168 501.5 170.5 Q504.5 174 502.2 186.5 Q501.5 178 499.4 176.4 Z" fill="#6aaee8" stroke="#1e6fc0" stroke-width="1.2"/>
<path d="M557.9 187.6 L566.9 165.2 L576.1 187.6 M561.7 180.4 L572.2 180.4" fill="none" stroke="#333" stroke-width="1.7" stroke-linecap="round" stroke-linejoin="round"/>
<rect x="549" y="190" width="35.8" height="9" fill="#4f91d9"/>
<path d="M632.9 187.6 L641.9 165.2 L651.1 187.6 M636.7 180.4 L647.2 180.4" fill="none" stroke="#333" stroke-width="1.7" stroke-linecap="round" stroke-linejoin="round"/>
<rect x="623.8" y="190" width="36.2" height="9" fill="#000"/>
<path d="M665.8 176.8 L680 176.8 L672.9 185 Z" fill="#6b6b6b"/>
<rect x="706.5" y="159" width="1.3" height="44.5" fill="#dcdcdc"/>
<rect x="1033.5" y="159" width="1.3" height="44.5" fill="#dcdcdc"/>
<rect x="1135.3" y="159" width="1.3" height="44.5" fill="#dcdcdc"/>
<rect x="1237.3" y="159" width="1.3" height="44.5" fill="#dcdcdc"/>
<rect x="1352.3" y="159" width="1.3" height="44.5" fill="#dcdcdc"/>
<rect x="1679.5" y="159" width="1.3" height="44.5" fill="#dcdcdc"/>
<g fill="#333"><rect x="740.3" y="167.6" width="33.3" height="1.4"/><rect x="740.3" y="173.5" width="24.2" height="1.4"/><rect x="740.3" y="179.3" width="33.3" height="1.4"/><rect x="740.3" y="185.3" width="24.2" height="1.4"/><rect x="740.3" y="191.2" width="33.3" height="1.4"/></g>
<rect x="816.5" y="165.8" width="29.4" height="28.9" fill="#fafafa" stroke="#333" stroke-width="1.4"/>
<path d="M831.3 165.8 L831.3 172.6 M831.3 187.4 L831.3 194.7" stroke="#444" stroke-width="1.2"/>
<rect x="816.5" y="172.9" width="29.4" height="14.3" fill="#f7fcff" stroke="#3a86c4" stroke-width="1.4"/>
<path d="M820.8 180.3 L840.8 180.3 M824.5 176.3 L820.6 180.3 L824.5 184.3 M837.1 176.3 L841 180.3 L837.1 184.3" fill="none" stroke="#3a86c4" stroke-width="1.4"/>
<path d="M915.7 184.2 L909.5 190.6 L915.7 196.6 M909.5 190.6 L917 190.6 Q923.5 190.6 923.3 186 Q923.2 183.5 921.7 182.4" fill="none" stroke="#3a86c4" stroke-width="1.4"/>
<path d="M966.5 175.3 L972.1 180.8 L966.5 186.4 M997.5 175.3 L991.9 180.8 L997.5 186.4" fill="none" stroke="#3a86c4" stroke-width="1.4"/>
<path d="M983.7 172 L990.8 172 L990.8 173.6 L988 173.6 L988 189.7 L986.5 189.7 L986.5 173.6 L983.7 173.6 L983.7 189.7 L982.2 189.7 L982.2 182.7 Q976 182.5 976 177.4 Q976 172 983.7 172 Z" fill="#333"/>
<path d="M1068.2 193.7 L1068.2 166.75 L1099.9 166.75 L1099.9 174.1 L1092.2 174.1 M1068.2 193.7 L1075.5 193.7 L1075.5 166.75 M1092.2 166.75 L1092.2 174.1 M1068.2 174.1 L1075.5 174.1 M1068.2 186 L1075.5 186" fill="#fafafa" stroke="#333" stroke-width="1.3"/>
<rect x="1075.5" y="174.1" width="16.7" height="11.9" fill="#fafafa"/>
<path d="M1092.2 178.2 L1092.2 174.1 L1075.5 174.1 L1075.5 186 L1083.8 186 Q1087.5 180.5 1092.2 178.2" fill="#84bdec" stroke="#1a5f9e" stroke-width="1.3"/>
<path d="M1088.5 189.5 L1100 177 Q1103 176.5 1102 179 L1090.5 191.5 Z" fill="#fff" stroke="#333" stroke-width="1.2"/>
<path d="M1074.4 196.6 Q1080 195.5 1082 192 Q1084 188.5 1087.5 189.2 Q1091 190 1089.8 193.5 Q1087.5 198.5 1081 198.2 Q1077 198 1074.4 196.6 Z" fill="#84bdec" stroke="#1a5f9e" stroke-width="1.2"/>
<path d="M1173 182.7 A10.3 10.3 0 1 1 1190.3 180" fill="#fafafa" stroke="#3a86c4" stroke-width="1.4"/>
<path d="M1180.4 169 L1180.4 176.3 L1185.8 176.3" fill="none" stroke="#333" stroke-width="1.5"/>
<g fill="none" stroke="#333" stroke-width="1.3"><path d="M1281.9 166.6 L1303.9 166.6 L1303.9 180.2 M1272.2 175 L1272.2 193.7 L1290.4 193.7"/></g>
<g fill="none" stroke="#555" stroke-width="1.2"><path d="M1282.5 193.7 L1282.5 175.4 L1302.7 175.4 M1293.2 166.6 L1293.2 181.7 M1272.7 184.6 L1287 184.6"/></g>
<path d="M1270.1 171.25 L1286.6 171.25 M1278.4 163.4 L1278.4 179.3" stroke="#3a9a4a" stroke-width="1.6"/>
<path d="M1290.2 183.1 L1305.4 198.2 M1305.4 183.1 L1290.2 198.2" stroke="#cc4444" stroke-width="1.5"/>
<path d="M1312 177 L1325.8 177 L1318.9 185 Z" fill="#6b6b6b"/>
<path d="M1415.3 166.8 L1391.5 166.8 L1403.5 180.8 L1391.5 194.8 L1415.3 194.8" fill="none" stroke="#333" stroke-width="1.8"/>
<path d="M1486.3 164 L1486.3 197 M1480 190.7 L1486.3 197 L1492.5 190.7" fill="none" stroke="#333" stroke-width="1.5"/>
<path d="M1561.2 164 L1561.2 197 M1554.9 190.7 L1561.2 197 L1567.5 190.7" fill="none" stroke="#333" stroke-width="1.5"/>
<path d="M1628.2 172.4 L1644 172.4 L1644 174.5 L1638.5 181 L1638.5 189.5 L1633.7 189.5 L1633.7 181 L1628.2 174.5 Z" fill="#fafafa" stroke="#333" stroke-width="1.4" stroke-linejoin="round"/>
<circle cx="1735.2" cy="175.5" r="10.3" fill="#fafafa" stroke="#333" stroke-width="1.5"/>
<path d="M1727.4 183.7 L1713.2 197.7" stroke="#333" stroke-width="1.6"/>
<rect x="1789.3" y="166.9" width="31.4" height="26.4" fill="#fafafa" stroke="#333" stroke-width="1.4"/>
<path d="M1799.8 166.9 L1799.8 193.3 M1810.2 166.9 L1810.2 193.3 M1789.3 175.6 L1820.7 175.6 M1789.3 184.6 L1820.7 184.6" stroke="#555" stroke-width="1.2"/>
<rect x="1799.8" y="175.8" width="20.9" height="8.8" fill="#84bdec" stroke="#1a6fb8" stroke-width="1.3"/>
<path d="M1878.5 193.3 L1886 186.3 L1893.5 193.3" fill="none" stroke="#111" stroke-width="2.2"/>
<g fill="none" stroke="#2b2b2b" stroke-linecap="round"><path d="M47.3 235.6 Q46.5 233.4 44.3 233.8 Q40.5 234.6 38.6 240.5 L35.7 251 L33.2 260.8 Q31 268.6 27 268.9 Q25.2 269 24.8 267.6" stroke-width="2"/><path d="M32.3 244 L42.8 244" stroke-width="1.6"/><path d="M42.6 249.2 Q45.6 248.4 46.8 252 L49.6 260.4 Q50.6 263 52.2 261.6 L53.9 259.3" stroke-width="1.8"/><path d="M53.8 249.6 Q51 249.3 48.6 252.2 L44.6 258.2 Q42.6 261.6 40.3 261.6" stroke-width="1.5"/></g><circle cx="47.4" cy="235.9" r="1.4" fill="#2b2b2b"/><circle cx="24.9" cy="267.3" r="1.4" fill="#2b2b2b"/><circle cx="53.7" cy="249.7" r="1.2" fill="#2b2b2b"/><circle cx="40.3" cy="261.4" r="1.3" fill="#2b2b2b"/>
<path d="M1879.5 248.5 L1886.5 255.8 L1893.5 248.5" fill="none" stroke="#222" stroke-width="2"/>
<path d="M23.75 312 L38 312 L38 298 Z" fill="#757575"/>
<rect x="27.2" y="1140.2" width="19.5" height="3.6" fill="#4f4f4f"/><rect x="35.2" y="1132.2" width="3.6" height="19.5" fill="#4f4f4f"/>
</svg>

</body></html>
